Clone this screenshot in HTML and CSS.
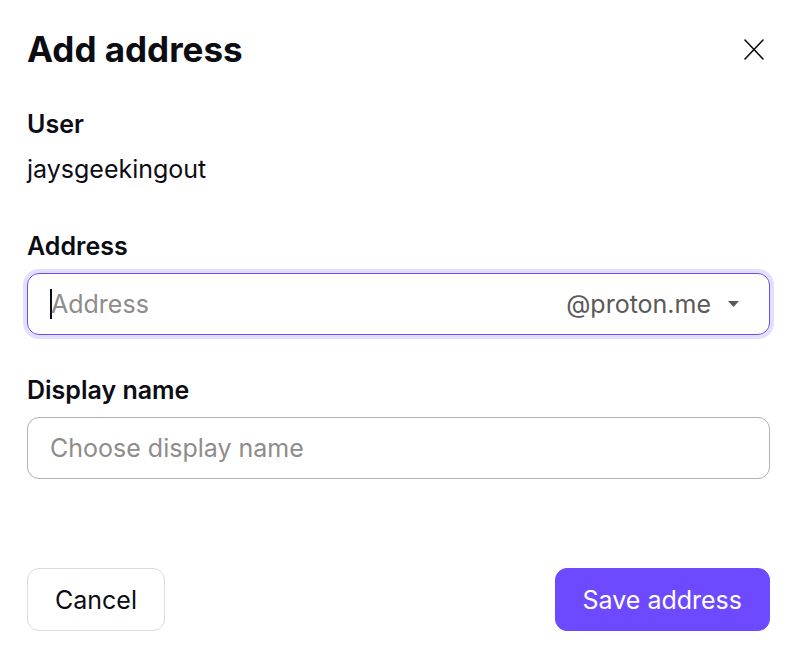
FILE: index.html
```html
<!DOCTYPE html>
<html lang="en">
<head>
<meta charset="utf-8">
<title>Add address</title>
<link rel="stylesheet" href="styles.css">
</head>
<body>
<div class="modal">
  <header class="modal-header">
    <h1 class="title">Add address</h1>
    <button class="close" aria-label="Close">
      <svg width="20" height="21" viewBox="0 0 20 21" fill="none" stroke="#0c0c14" stroke-width="1.6" stroke-linecap="round"><path d="M1 1 L19 20 M19 1 L1 20"/></svg>
    </button>
  </header>

  <div class="field field-user">
    <div class="label">User</div>
    <div class="value">jaysgeekingout</div>
  </div>

  <div class="field field-address">
    <div class="label">Address</div>
    <div class="input input-focus">
      <span class="caret"></span>
      <span class="placeholder grow">Address</span>
      <span class="domain">@proton.me</span>
      <svg class="chevron" width="11" height="6" viewBox="0 0 11 6"><path d="M0 0 H11 L5.5 6 Z" fill="#5c5958"/></svg>
    </div>
  </div>

  <div class="field field-display">
    <div class="label">Display name</div>
    <div class="input input-plain">
      <span class="placeholder">Choose display name</span>
    </div>
  </div>

  <footer class="actions">
    <button class="btn btn-outline">Cancel</button>
    <button class="btn btn-primary">Save address</button>
  </footer>
</div>
</body>
</html>
```

FILE: styles.css
```css
* { box-sizing: border-box; }
html, body { margin: 0; padding: 0; background: #ffffff; }
body {
  font-family: Inter, "Noto Sans", "Liberation Sans", sans-serif;
  color: #0c0c14;
}
.modal {
  padding: 28px 30px 0 27px;
  display: flex;
  flex-direction: column;
}
.modal-header {
  display: flex;
  justify-content: space-between;
  align-items: flex-start;
}
.title {
  margin: 0;
  font-size: 35px;
  line-height: 42px;
  font-weight: 700;
}
.close {
  border: 0;
  background: none;
  padding: 0;
  margin: 11px 6px 0 0;
  width: 20px;
  height: 21px;
  display: flex;
}
.field { display: flex; flex-direction: column; }
.field-user { margin-top: 39px; }
.label {
  font-size: 25px;
  line-height: 30px;
  font-weight: 600;
}
.value {
  margin-top: 15px;
  font-size: 25px;
  line-height: 30px;
}
.field-address { margin-top: 47px; }
.field-display { margin-top: 40px; }
.input {
  margin-top: 12px;
  border-radius: 12px;
  display: flex;
  align-items: center;
  padding: 0 30px 0 22px;
  font-size: 25px;
}
.input-focus {
  height: 62px;
  border: 1.5px solid #6d4aff;
  box-shadow: 0 0 0 4px #e4deff;
}
.input-plain {
  height: 62px;
  border: 1px solid #b3b0ae;
}
.caret {
  width: 2px;
  height: 30px;
  background: #0c0c14;
  margin-right: -1px;
}
.placeholder { color: #8f8c8a; }
.grow { flex: 1; }
.domain { color: #5c5958; }
.chevron { margin-left: 17px; }
.actions {
  margin-top: 89px;
  display: flex;
  justify-content: space-between;
}
.btn {
  height: 63px;
  border-radius: 12px;
  font-family: inherit;
  font-size: 25px;
  padding: 0 27px;
}
.btn-outline {
  background: #ffffff;
  border: 1px solid #dedbd9;
  color: #0c0c14;
}
.btn-primary {
  background: #6d4aff;
  border: 1px solid #6d4aff;
  color: #ffffff;
}
```
